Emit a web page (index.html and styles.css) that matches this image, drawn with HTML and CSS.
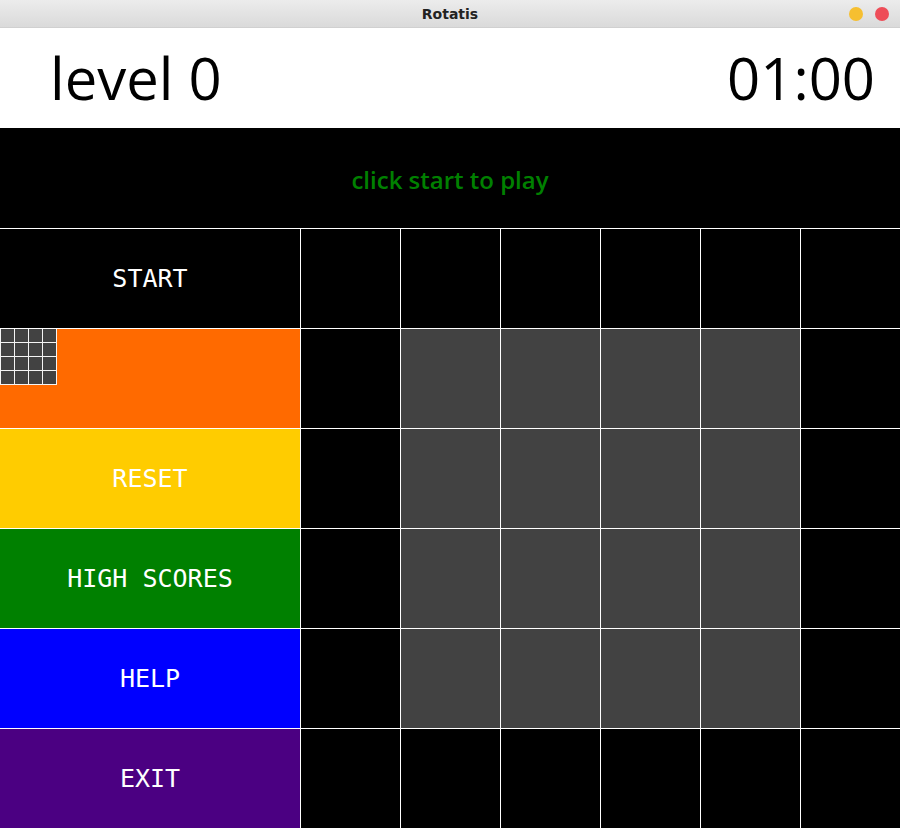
FILE: index.html
```html
<!DOCTYPE html>
<html lang="en">

<head>
    <meta charset="UTF-8">
    <meta name="viewport" content="width=device-width, initial-scale=1.0">
    <title>Rotatis</title>
    <link rel="stylesheet" href="styles.css">
</head>

<body>
    <!-- Window title bar -->
    <div class="titlebar">
        <span class="title">Rotatis</span>
        <div class="controls">
            <span class="dot yellow"></span>
            <span class="dot red"></span>
        </div>
    </div>

    <!-- Level and timer -->
    <div class="header">
        <div class="level">level 0</div>
        <div class="timer">01:00</div>
    </div>

    <div class="message">click start to play</div>

    <!-- Board -->
    <div class="board">
        <div class="menu start">START</div>
        <div class="cell"></div><div class="cell"></div><div class="cell"></div><div class="cell"></div><div class="cell"></div><div class="cell"></div>

        <div class="menu orange">
            <div class="preview">
                <span></span><span></span><span></span><span></span>
                <span></span><span></span><span></span><span></span>
                <span></span><span></span><span></span><span></span>
                <span></span><span></span><span></span><span></span>
            </div>
        </div>
        <div class="cell"></div><div class="cell gray"></div><div class="cell gray"></div><div class="cell gray"></div><div class="cell gray"></div><div class="cell"></div>

        <div class="menu yellow">RESET</div>
        <div class="cell"></div><div class="cell gray"></div><div class="cell gray"></div><div class="cell gray"></div><div class="cell gray"></div><div class="cell"></div>

        <div class="menu green">HIGH SCORES</div>
        <div class="cell"></div><div class="cell gray"></div><div class="cell gray"></div><div class="cell gray"></div><div class="cell gray"></div><div class="cell"></div>

        <div class="menu blue">HELP</div>
        <div class="cell"></div><div class="cell gray"></div><div class="cell gray"></div><div class="cell gray"></div><div class="cell gray"></div><div class="cell"></div>

        <div class="menu purple">EXIT</div>
        <div class="cell"></div><div class="cell"></div><div class="cell"></div><div class="cell"></div><div class="cell"></div><div class="cell"></div>
    </div>
</body>

</html>
```

FILE: styles.css
```css
body {
    margin: 0;
    width: 900px;
    height: 828px;
    overflow: hidden;
    background-color: white;
    font-family: "Open Sans", sans-serif;
}

.titlebar {
    height: 28px;
    display: flex;
    align-items: center;
    justify-content: center;
    position: relative;
    background: linear-gradient(#ececec, #dadada);
    box-sizing: border-box;
    border-bottom: 1px solid #d0d0d0;
}

.title {
    font-family: "DejaVu Sans", sans-serif;
    font-weight: bold;
    font-size: 14px;
    color: #222;
}

.controls {
    position: absolute;
    right: 11px;
    top: 7px;
    display: flex;
    gap: 12px;
}

.dot {
    width: 14px;
    height: 14px;
    border-radius: 50%;
}

.dot.yellow {
    background-color: #f6bf30;
}

.dot.red {
    background-color: #ee4d58;
}

.header {
    height: 100px;
    display: flex;
    align-items: center;
    justify-content: space-between;
    padding: 0 25px 0 50px;
}

.level,
.timer {
    font-size: 58px;
    color: black;
    line-height: 1;
}

.message {
    height: 100px;
    background-color: black;
    color: #008000;
    font-size: 24px;
    font-weight: 600;
    display: flex;
    align-items: center;
    justify-content: center;
    padding-top: 2px;
    box-sizing: border-box;
}

.board {
    display: grid;
    grid-template-columns: 300px repeat(6, 99px);
    grid-template-rows: repeat(6, 99px);
    gap: 1px;
    padding-top: 1px;
    background-color: white;
}

.cell {
    background-color: black;
}

.cell.gray {
    background-color: #424242;
}

.menu {
    display: flex;
    align-items: center;
    justify-content: center;
    font-family: "DejaVu Sans Mono", monospace;
    font-size: 25px;
    color: white;
}

.menu.start {
    background-color: black;
}

.menu.orange {
    background-color: #ff6a00;
    align-items: flex-start;
    justify-content: flex-start;
}

.menu.yellow {
    background-color: #ffcc00;
}

.menu.green {
    background-color: #008000;
}

.menu.blue {
    background-color: #0000ff;
}

.menu.purple {
    background-color: #4b0082;
}

.preview {
    display: grid;
    grid-template-columns: repeat(4, 13px);
    grid-template-rows: repeat(4, 13px);
    gap: 1px;
    padding: 0 1px 1px 1px;
    background-color: #f4f4f4;
}

.preview span {
    background-color: #424242;
}
```
